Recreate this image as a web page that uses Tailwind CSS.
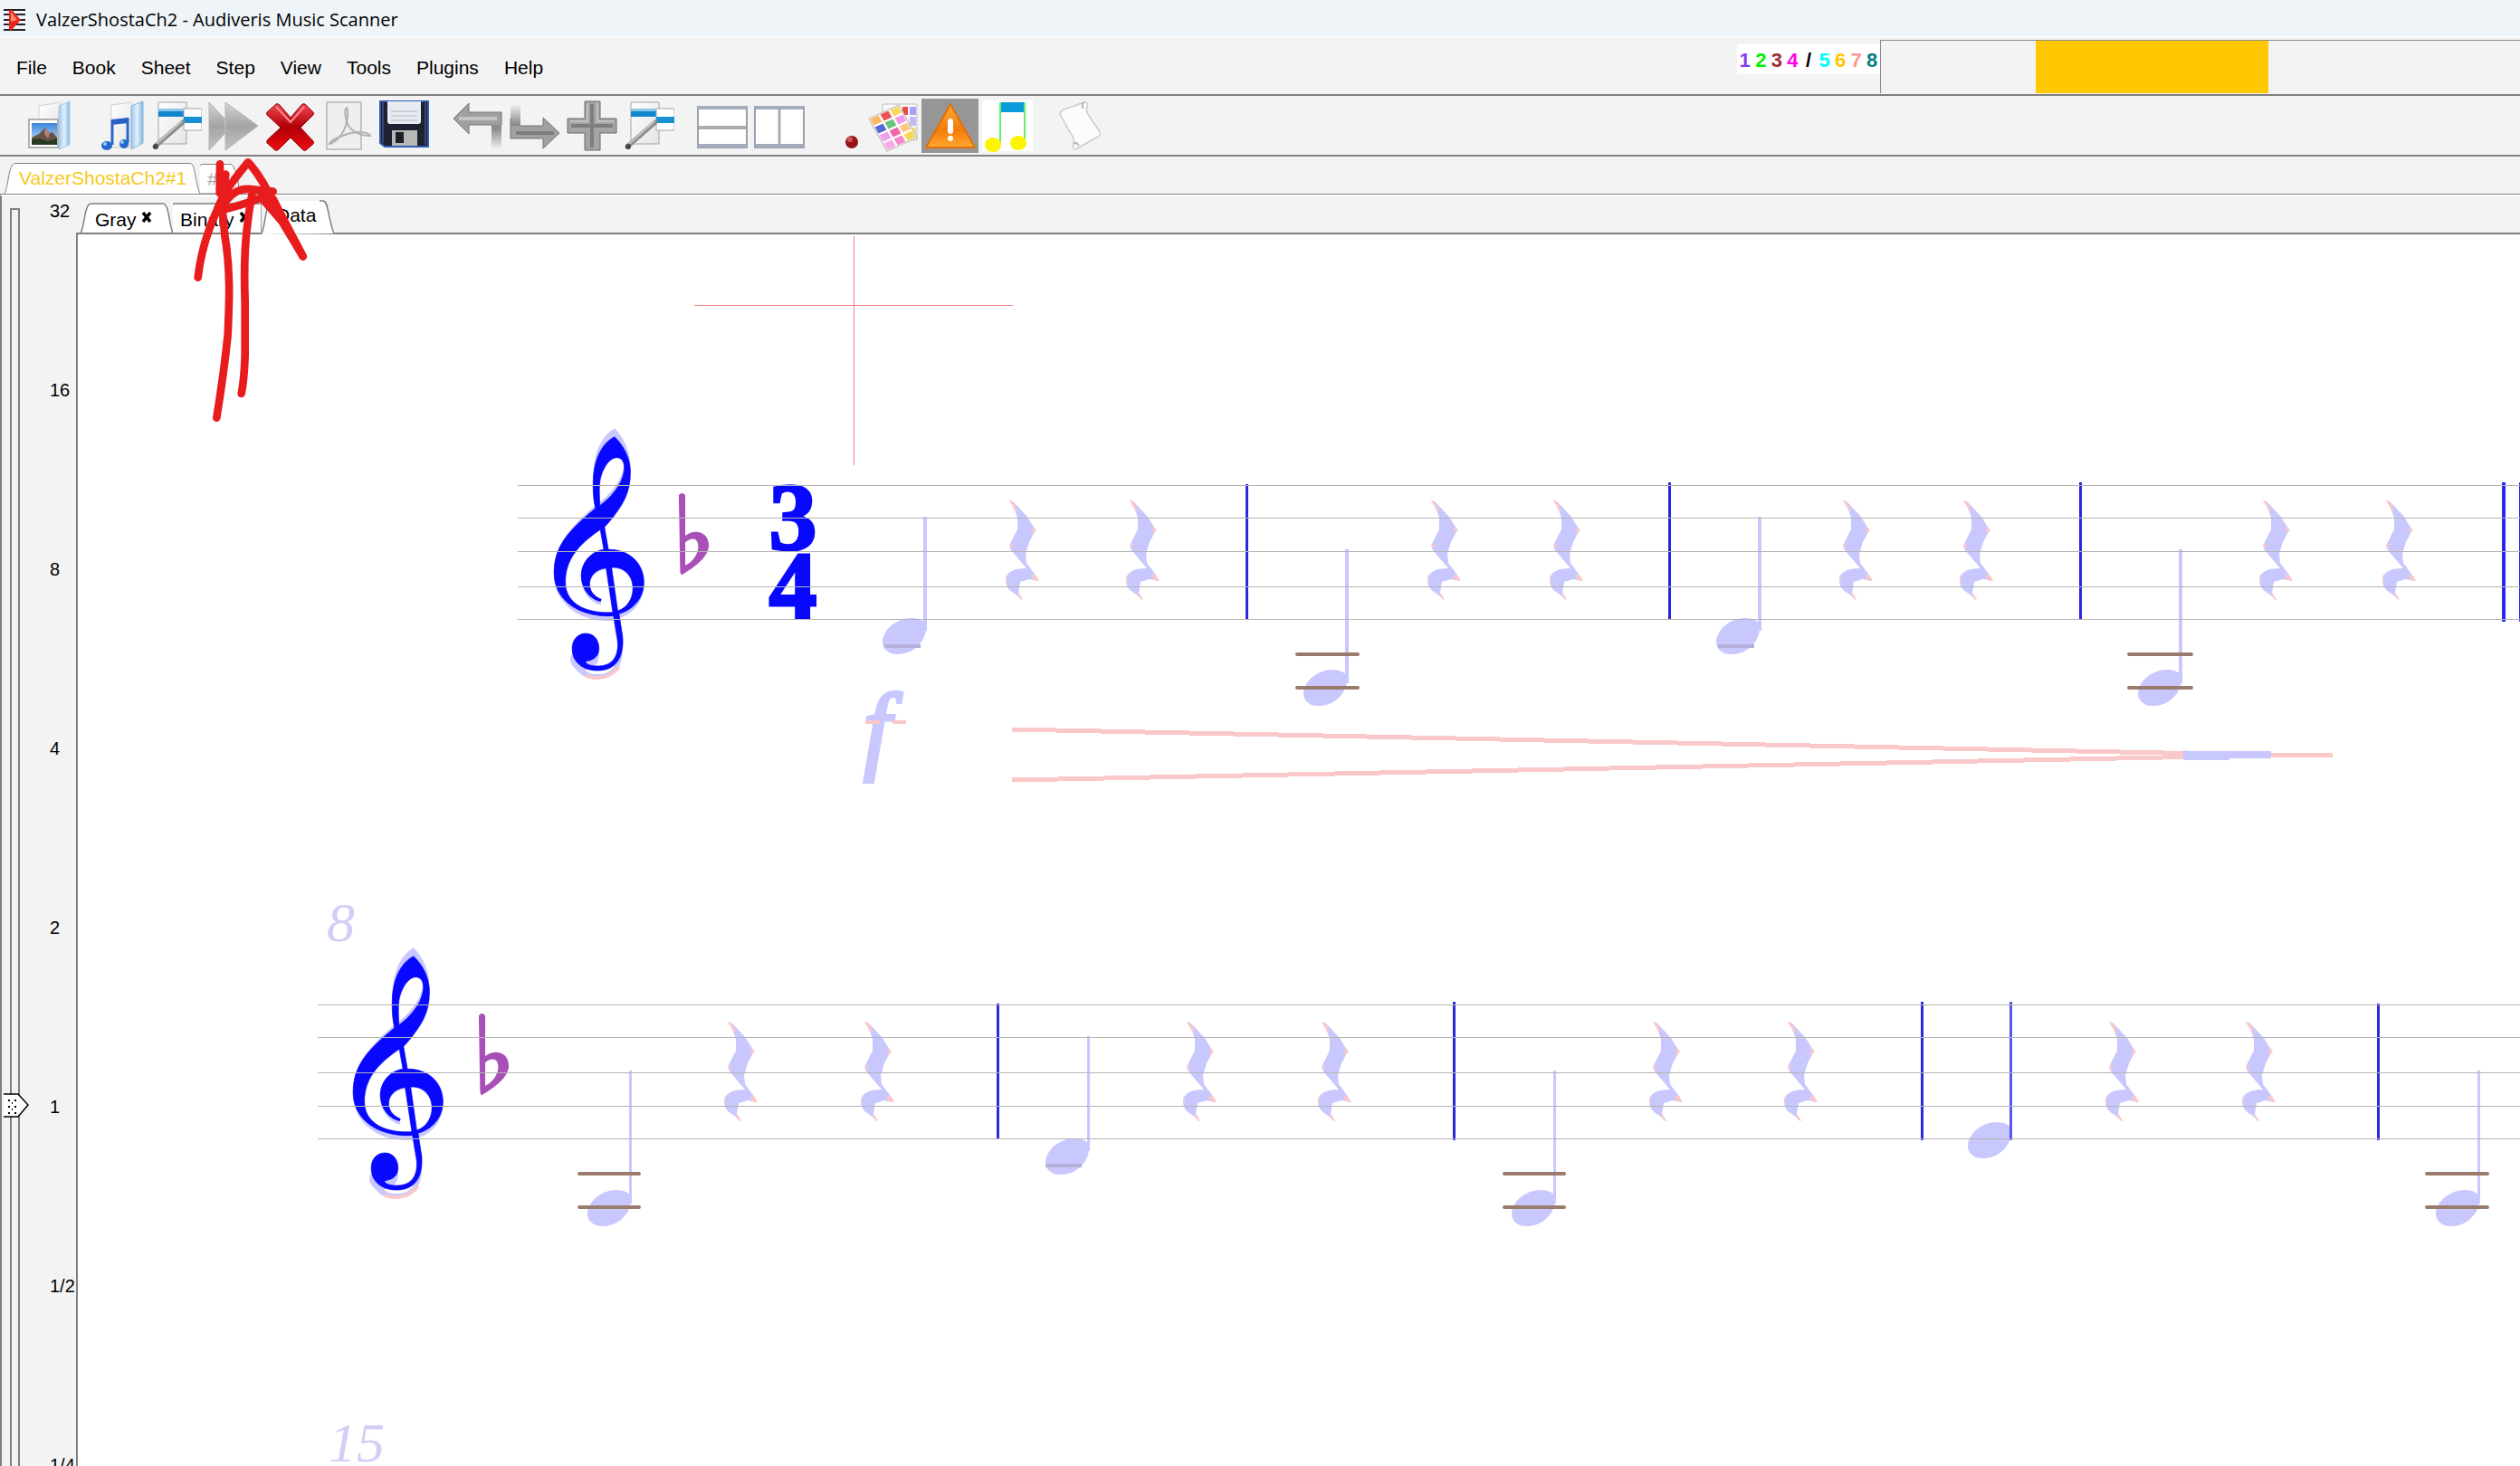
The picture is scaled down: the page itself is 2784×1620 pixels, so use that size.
<!DOCTYPE html>
<html lang="en">
<head>
    <meta charset="UTF-8">
    <meta name="viewport" content="width=device-width, initial-scale=1.0">
    <title>ValzerShostaCh2 - Audiveris Music Scanner</title>
    <script src="https://cdn.jsdelivr.net/npm/@tailwindcss/browser@4"></script>
</head>
<body class="relative flex h-screen flex-col overflow-hidden bg-[#f3f3f3] font-['Liberation_Sans',Arial,sans-serif] text-[21px] leading-6 text-black">

    <!-- Title bar -->
    <header class="flex h-10 shrink-0 items-center gap-3 bg-[#eff4f9] pt-1 pl-1">
        <svg class="h-6 w-6" viewBox="0 0 24 24">
            <path d="M0 1h24M0 6h24M0 12h24M0 17h24M0 23h24" stroke="#222" stroke-width="2"/>
            <path d="M6 1l3 0 10 11-10 11H6z" fill="#e8261c"/>
            <path d="M8 3l7 9-7 2z" fill="#ff8a70"/>
        </svg>
        <h1 class="font-['Open_Sans',sans-serif] text-[20px]">ValzerShostaCh2 - Audiveris Music Scanner</h1>
    </header>

    <!-- Menu bar with step progress -->
    <div class="flex h-16 shrink-0 border-t border-white">
        <nav class="flex items-center gap-7 pt-1 pl-[18px]">
            <button>File</button>
            <button>Book</button>
            <button>Sheet</button>
            <button>Step</button>
            <button>View</button>
            <button>Tools</button>
            <button>Plugins</button>
            <button>Help</button>
        </nav>
        <div class="ml-auto flex w-[31%] max-w-[867px] min-w-[840px]">
            <div class="mt-2 -ml-[2px] grid h-[33px] w-[158px] shrink-0 grid-cols-9 items-center bg-white pt-[2px] text-center text-[22px] font-bold">
                <span class="text-[#8040f0]">1</span>
                <span class="text-[#00f000]">2</span>
                <span class="text-[#a02830]">3</span>
                <span class="text-[#ff00e8]">4</span>
                <span>/</span>
                <span class="text-[#00ffff]">5</span>
                <span class="text-[#ffc800]">6</span>
                <span class="text-[#ff9696]">7</span>
                <span class="text-[#008080]">8</span>
            </div>
            <div role="progressbar" aria-label="Step progress" class="mt-[3px] mb-px flex flex-1 border-t border-l border-[#8c8c8c] pl-[171px]">
                <div class="w-[257px] bg-[#ffc800]"></div>
            </div>
        </div>
    </div>

    <!-- Tool bar -->
    <div class="flex h-[69px] shrink-0 items-center border-y-2 border-[#808080] pl-[21px]">
        <button aria-label="Open image" class="flex h-[60px] w-[63px] justify-center">
            <svg class="h-[60px] w-14" viewBox="0 0 56 60">
                <defs>
                    <linearGradient id="pane" x1="0" x2="1"><stop offset="0" stop-color="#9cc8ee"/><stop offset=".5" stop-color="#e2f1fc"/><stop offset="1" stop-color="#84b4dc"/></linearGradient>
                    <linearGradient id="paper" x1="0" y1="0" x2="1" y2="1"><stop offset="0" stop-color="#fff"/><stop offset="1" stop-color="#e4e4e4"/></linearGradient>
                    <linearGradient id="sky" x2="0" y2="1"><stop offset="0" stop-color="#3a86dc"/><stop offset="1" stop-color="#cfe6fa"/></linearGradient>
                </defs>
                <path d="M18 8l24-4v40H18z" fill="url(#paper)" stroke="#d0d0d0"/>
                <path d="M40 8l12-5v48l-12 5z" fill="url(#pane)" stroke="#a8cbe8"/>
                <path d="M7 23h32v31H7z" fill="#fff" stroke="#b0b0b0" stroke-width="2"/>
                <path d="M10 27h28v24H10z" fill="url(#sky)"/>
                <path d="M10 43l8-4 7-7 5 6 3-1 5 6v5H10z" fill="#6a5148"/>
                <path d="M25 32l5 6-2 6-4-5z" fill="#a98478"/>
                <path d="M10 45l9-1 8 3 11-3v7H10z" fill="#263c22"/>
            </svg>
        </button>
        <span class="w-4"></span>
        <button aria-label="Open book" class="flex h-[60px] w-[63px] justify-center">
            <svg class="h-[60px] w-14" viewBox="0 0 56 60">
                <path d="M19 7l23-3v50H19z" fill="url(#paper)" stroke="#d0d0d0"/>
                <path d="M41 8l13-5v46l-13 7z" fill="url(#pane)" stroke="#8ab4da"/>
                <path d="M20 51V25l17-2v26" fill="none" stroke="#2c68c8" stroke-width="3"/>
                <path d="M19 23l19-2v6l-19 2z" fill="#2a62c4"/>
                <ellipse cx="14" cy="52" rx="6" ry="5" fill="#2468cc"/>
                <ellipse cx="33" cy="50" rx="5" ry="5" fill="#2468cc"/>
                <circle cx="12" cy="50" r="2" fill="#9cc8f8"/>
                <circle cx="31" cy="48" r="2" fill="#9cc8f8"/>
            </svg>
        </button>
        <button aria-label="Transcribe sheet" class="flex h-[60px] w-[63px] justify-center">
            <svg class="h-[60px] w-14" viewBox="0 0 56 60">
                <path d="M8 4h31v46H8z" fill="url(#paper)" stroke="#a4a4a4"/>
                <path d="M8 11h31v9H8z" fill="#1286cc"/>
                <path d="M8 11h31v3H8z" fill="#8cc8ec"/>
                <path d="M36 11h20v24H36z" fill="#fff" stroke="#a4a4a4"/>
                <path d="M36 20h20v7H36z" fill="#1a90d4"/>
                <path d="M4 53L35 26" stroke="#8c8c8c" stroke-width="5" stroke-linecap="round"/>
                <path d="M6 50L34 25" stroke="#c4c4c4" stroke-width="2"/>
                <circle cx="5" cy="53" r="3" fill="#444"/>
            </svg>
        </button>
        <button aria-label="Transcribe book" class="flex h-[60px] w-[63px] justify-center">
            <svg class="h-[60px] w-14" viewBox="0 0 56 60">
                <defs><linearGradient id="gray" x2="0" y2="1"><stop offset="0" stop-color="#d4d4d4"/><stop offset=".5" stop-color="#a4a4a4"/><stop offset="1" stop-color="#c4c4c4"/></linearGradient></defs>
                <path d="M1 4l18 19V4l36 26-36 27V38L1 57z" fill="url(#gray)" stroke="#b4b4b4"/>
                <path d="M19 23v15" stroke="#c8c8c8"/>
            </svg>
        </button>
        <button aria-label="Stop" class="flex h-[60px] w-[63px] justify-center">
            <svg class="h-[60px] w-14" viewBox="0 0 56 60">
                <defs><linearGradient id="red" x2="0" y2="1"><stop offset="0" stop-color="#f04850"/><stop offset=".5" stop-color="#b00008"/><stop offset="1" stop-color="#f00c10"/></linearGradient></defs>
                <path d="M12 6q2-1 4 1l12 14L40 7q2-2 4-1l9 9q1 2 0 3L39 32l14 15q1 2 0 3l-8 7q-2 1-4-1L28 43 15 56q-2 2-4 1l-9-8q-1-2 1-4l14-13L2 18q-1-2 0-3z" fill="url(#red)" stroke="#98040c"/>
                <path d="M12 9l16 17L43 9" fill="none" stroke="#ff8a8a" stroke-width="2"/>
            </svg>
        </button>
        <button aria-label="Export PDF" class="flex h-[60px] w-[63px] justify-center">
            <svg class="h-[60px] w-14" viewBox="0 0 56 60">
                <path d="M5 4h38v52H5z" fill="#efefef" stroke="#c4c4c4" stroke-width="2"/>
                <path d="M8 50c8-2 14-10 18-20 2-8 3-16 1-20-3 2-2 12 2 20 4 6 14 12 24 11-2-5-18-5-28-1-8 3-16 6-17 10z" fill="none" stroke="#b0b0b0" stroke-width="2"/>
            </svg>
        </button>
        <button aria-label="Save" class="flex h-[60px] w-[63px] justify-center">
            <svg class="h-[60px] w-14" viewBox="0 0 56 60">
                <path d="M1 3h53v50H6l-5-4z" fill="#1c2232" stroke="#2a5cb8" stroke-width="2"/>
                <path d="M9 3h37v22q0 3-3 3H12q-3 0-3-3z" fill="#e8ecf2"/>
                <path d="M13 14h29M13 19h29M13 24h29" stroke="#b4b8c0" stroke-width="1"/>
                <path d="M14 35h28v17H14z" fill="#b8b8b4"/>
                <path d="M18 37h9v12h-9z" fill="#1c2028"/>
                <path d="M4 3v46M51 3v48" stroke="#3c4660" stroke-width="2"/>
            </svg>
        </button>
        <span class="w-[18px]"></span>
        <button aria-label="Undo" class="flex h-[60px] w-[63px] justify-center">
            <svg class="h-[60px] w-14" viewBox="0 0 56 60">
                <defs><linearGradient id="fade" x2="0" y2="1"><stop offset=".2" stop-color="#8c8c8c"/><stop offset="1" stop-color="#8c8c8c" stop-opacity="0"/></linearGradient></defs>
                <path d="M43 28h11v28H43z" fill="url(#fade)"/>
                <path d="M1 22L18 5v10h36v14H18v10z" fill="#a0a0a0"/>
                <path d="M43 29H18v10L1 22 18 5v10h36v14" fill="none" stroke="#747474"/>
                <path d="M7 22h42" stroke="#c4c4c4" stroke-width="4"/>
            </svg>
        </button>
        <button aria-label="Redo" class="flex h-[60px] w-[63px] justify-center">
            <svg class="h-[60px] w-14" viewBox="0 0 56 60">
                <defs><linearGradient id="rise" x2="0" y2="1"><stop offset="0" stop-color="#8c8c8c" stop-opacity="0"/><stop offset=".8" stop-color="#8c8c8c"/></linearGradient></defs>
                <path d="M1 6h11v28H1z" fill="url(#rise)"/>
                <path d="M1 30h36V21l18 17-18 17V44H1z" fill="#a0a0a0"/>
                <path d="M1 22v22h36v11l18-17-18-17v9H12" fill="none" stroke="#747474"/>
                <path d="M7 38h42" stroke="#7c7c7c" stroke-width="4"/>
            </svg>
        </button>
        <button aria-label="Zoom in" class="flex h-[60px] w-[63px] justify-center">
            <svg class="h-[60px] w-14" viewBox="0 0 56 60">
                <path d="M20 3h17v19h18v16H37v19H20V38H1V22h19z" fill="#a4a4a4" stroke="#6c6c6c"/>
                <path d="M28 6v48M5 30h46" stroke="#7e7e7e" stroke-width="4"/>
                <path d="M23 5v20H4M34 5v20h18" fill="none" stroke="#c0c0c0" stroke-width="2"/>
            </svg>
        </button>
        <button aria-label="Reprocess" class="flex h-[60px] w-[63px] justify-center">
            <svg class="h-[60px] w-14" viewBox="0 0 56 60">
                <path d="M8 4h31v46H8z" fill="url(#paper)" stroke="#a4a4a4"/>
                <path d="M8 11h31v9H8z" fill="#1286cc"/>
                <path d="M8 11h31v3H8z" fill="#8cc8ec"/>
                <path d="M36 11h20v24H36z" fill="#fff" stroke="#a4a4a4"/>
                <path d="M36 20h20v7H36z" fill="#1a90d4"/>
                <path d="M4 53L35 26" stroke="#8c8c8c" stroke-width="5" stroke-linecap="round"/>
                <path d="M6 50L34 25" stroke="#c4c4c4" stroke-width="2"/>
                <circle cx="5" cy="53" r="3" fill="#444"/>
            </svg>
        </button>
        <span class="w-[18px]"></span>
        <button aria-label="Fit width" class="flex h-[60px] w-[63px] justify-center">
            <svg class="h-[60px] w-14" viewBox="0 0 56 60">
                <path d="M1 9h54v45H1z" fill="#fff" stroke="#98a0b0" stroke-width="2"/>
                <path d="M1 10h54M1 52h54" stroke="#a4acbc" stroke-width="4"/>
                <path d="M2 32h52" stroke="#acacac" stroke-width="4"/>
            </svg>
        </button>
        <button aria-label="Fit height" class="flex h-[60px] w-[63px] justify-center">
            <svg class="h-[60px] w-14" viewBox="0 0 56 60">
                <path d="M1 9h54v45H1z" fill="#fff" stroke="#98a0b0" stroke-width="2"/>
                <path d="M1 10h54M1 52h54" stroke="#a4acbc" stroke-width="4"/>
                <path d="M28 12v38" stroke="#acacac" stroke-width="3"/>
            </svg>
        </button>
        <button aria-label="Mark" class="flex h-[60px] w-[63px] justify-center">
            <svg class="h-[60px] w-14" viewBox="0 0 56 60">
                <circle cx="45" cy="48" r="7" fill="#981414"/>
                <circle cx="43" cy="45" r="3" fill="#c85858"/>
            </svg>
        </button>
        <button aria-label="Voices" class="flex h-[60px] w-[63px] justify-center">
            <svg class="h-[60px] w-14" viewBox="0 0 56 60">
                <path d="M16 6h38v40H16z" fill="#fafafa" stroke="#c0c0c0"/>
                <path d="M38 9h6v9h-6z" fill="#e84848"/>
                <path d="M46 9h7v9h-7z" fill="#a8a0f0"/>
                <path d="M46 20h7v10h-7z" fill="#c4b8f8"/>
                <path d="M46 32h7v10h-7z" fill="#f8e078"/>
                <g transform="matrix(11 -5 5 9 1 22)">
                    <path d="M0 0h3v4H0z" fill="#fff" stroke="#bbb" stroke-width=".1"/>
                    <path d="M.1.1h.8v.8h-.8z" fill="#fcb860"/>
                    <path d="M1.1.1h.8v.8h-.8z" fill="#f05058"/>
                    <path d="M2.1.1h.8v.8h-.8z" fill="#fcd860"/>
                    <path d="M.1 1.1h.8v.8h-.8z" fill="#5868d8"/>
                    <path d="M1.1 1.1h.8v.8h-.8z" fill="#68c478"/>
                    <path d="M2.1 1.1h.8v.8h-.8z" fill="#f498e8"/>
                    <path d="M.1 2.1h.8v.8h-.8z" fill="#f0a0e8"/>
                    <path d="M1.1 2.1h.8v.8h-.8z" fill="#f068a8"/>
                    <path d="M2.1 2.1h.8v.8h-.8z" fill="#fcc880"/>
                    <path d="M.1 3.1h.8v.8h-.8z" fill="#f8a8e8"/>
                    <path d="M1.1 3.1h.8v.8h-.8z" fill="#f888c8"/>
                    <path d="M2.1 3.1h.8v.8h-.8z" fill="#f8d850"/>
                </g>
            </svg>
        </button>
        <button aria-label="Errors" class="flex h-[60px] w-[63px] justify-center bg-[#969696]">
            <svg class="h-[60px] w-14" viewBox="0 0 56 60">
                <defs><linearGradient id="warn" x2="0" y2="1"><stop offset="0" stop-color="#fca838"/><stop offset=".6" stop-color="#f47c08"/><stop offset="1" stop-color="#ffa830"/></linearGradient></defs>
                <path d="M28 6l27 48H1z" fill="url(#warn)" stroke="#e07008" stroke-width="2" stroke-linejoin="round"/>
                <path d="M28 25v11" stroke="#fff" stroke-width="6" stroke-linecap="round"/>
                <circle cx="28" cy="44" r="3" fill="#fff"/>
            </svg>
        </button>
        <button aria-label="Play" class="flex h-[60px] w-[63px] justify-center">
            <svg class="h-[60px] w-14" viewBox="0 0 56 60">
                <path d="M0 2h56v56H0z" fill="#fff"/>
                <path d="M19 4h28v11H19z" fill="#0a9cdc"/>
                <path d="M20 4v46M47 4v44" stroke="#60f070" stroke-width="2"/>
                <ellipse cx="12" cy="51" rx="9" ry="8" fill="#fcf400"/>
                <ellipse cx="40" cy="49" rx="9" ry="8" fill="#fcf400"/>
            </svg>
        </button>
        <span class="w-4"></span>
        <button aria-label="Script" class="flex h-[60px] w-[63px] justify-center">
            <svg class="h-[60px] w-14" viewBox="0 0 56 60">
                <path d="M7 17q2-5 7-6l20-7q5 0 3 5-2 5 4 13l9 13q3 5-1 7l-23 13q-6 3-4-4 2-6-4-14z" fill="#fcfcfc" stroke="#ccc" stroke-width="1.5"/>
                <path d="M22 50q3-3 6 2M34 4q-4 2-1 7" fill="none" stroke="#b8b8b8" stroke-width="2"/>
            </svg>
        </button>
    </div>

    <!-- Sheet tabs -->
    <div class="flex h-[42px] shrink-0 items-end border-b border-[#808080] pl-[5px]">
        <button class="relative h-[34px] w-[216px] text-left text-[#f8c820]">
            <svg class="absolute inset-0 h-full w-full" viewBox="0 0 216 34" preserveAspectRatio="none"><path d="M0 34C5 24 4 1 12 .5H205C211 1 210 20 216 34" fill="#fff" stroke="#808080"/></svg>
            <span class="relative pl-4">ValzerShostaCh2#1</span>
        </button>
        <button class="relative h-[33px] w-[44px] text-left text-[#a8a8a8]">
            <svg class="absolute inset-0 h-full w-full" viewBox="0 0 44 33" preserveAspectRatio="none"><path d="M-4 7Q-1 1 2 .5H34Q40 2 44 33H0" fill="#fff" stroke="#808080"/></svg>
            <span class="relative pl-2">#2</span>
        </button>
    </div>

    <main class="flex min-h-0 flex-1 border-t-2 border-l-2 border-t-white border-l-[#808080]">
        <!-- Zoom slider -->
        <aside class="relative flex w-[82px] shrink-0 overflow-hidden">
            <input type="range" min="-2" max="5" value="0" aria-label="Zoom" class="mt-[13px] ml-[9px] h-full w-[11px] shrink-0 appearance-none border-t-2 border-r-2 border-l-2 border-[#808080] [direction:rtl] [writing-mode:vertical-lr] [&::-webkit-slider-thumb]:opacity-0">
            <svg class="absolute top-[991px] left-[2px] h-7 w-7" viewBox="0 0 28 28">
                <path d="M0 1h16l11 12-11 13H0z" fill="#fff"/>
                <path d="M0 1h16l11 12-11 13H0" fill="none" stroke="#000" stroke-width="1.5"/>
                <path d="M5 7h2v2H5zM12 7h2v2h-2zM9 10h1v2H9zM5 14h2v2H5zM12 14h2v2h-2zM9 17h1v2H9zM5 21h2v2H5zM12 21h2v2h-2z"/>
            </svg>
            <div class="flex flex-col pt-[4px] pl-[33px] text-[20px] leading-6">
                <span class="h-[198px] shrink-0">32</span>
                <span class="h-[198px] shrink-0">16</span>
                <span class="h-[198px] shrink-0">8</span>
                <span class="h-[198px] shrink-0">4</span>
                <span class="h-[198px] shrink-0">2</span>
                <span class="h-[198px] shrink-0">1</span>
                <span class="h-[198px] shrink-0">1/2</span>
                <span class="h-[198px] shrink-0">1/4</span>
            </div>
        </aside>

        <section class="flex min-w-0 flex-1 flex-col">
            <!-- Views of the sheet -->
            <div class="flex h-[42px] shrink-0 items-end border-b-2 border-[#808080] pl-[5px]">
                <button class="relative h-[33px] w-[102px] pt-1 pl-4 text-left">
                    <svg class="absolute inset-0 h-full w-full" viewBox="0 0 102 33" preserveAspectRatio="none"><path d="M0 34C5 24 4 1 12 1H91C98 2 97 20 102 34" fill="#fff" stroke="#808080" stroke-width="1.5"/></svg>
                    <span class="relative">Gray</span>
                    <svg class="relative mb-2 inline h-3 w-3" viewBox="0 0 12 12"><path d="M2 1l8 10M10 1L2 11" stroke="#000" stroke-width="3.5"/></svg>
                </button>
                <button class="relative h-[33px] w-[98px] pt-1 pl-2 text-left whitespace-nowrap">
                    <svg class="absolute inset-0 h-full w-full" viewBox="0 0 98 33" preserveAspectRatio="none"><path d="M-4 7Q-1 1 2 1H98V34H0" fill="#fff" stroke="#808080" stroke-width="1.5"/></svg>
                    <span class="relative">Binary</span>
                    <svg class="relative mb-2 inline h-3 w-3" viewBox="0 0 12 12"><path d="M2 1l8 10M10 1L2 11" stroke="#000" stroke-width="3.5"/></svg>
                </button>
                <button class="relative -mb-[2px] h-[38px] w-[80px] pb-1 pl-4 text-left">
                    <svg class="absolute inset-0 h-full w-full" viewBox="0 0 80 38" preserveAspectRatio="none"><path d="M0 38C5 26 4 1 12 1H66C74 1 73 20 80 37" fill="#fff"/><path d="M0 37C5 26 4 1 12 1M64 1H68C74 1 73 20 80 37" fill="none" stroke="#808080" stroke-width="1.5"/></svg>
                    <span class="relative">Data</span>
                </button>
            </div>

            <!-- Score canvas, drawn in window coordinates -->
            <svg class="min-h-0 w-full flex-1 border-l-2 border-[#808080] bg-white">
                <defs>
                    <path id="clef" fill-rule="evenodd" d="M333 68C360 95 384 140 382 190C382 250 360 290 335 325C322 345 308 360 302 368L314 442C375 440 424 485 424 550C424 600 395 640 347 655L358 730C362 780 350 843 280 843C235 843 202 815 202 770C202 740 220 720 244 720C270 720 285 742 285 770C285 795 270 808 245 812C240 816 250 828 280 828C325 828 346 800 343 745L330 662C240 670 146 620 146 520C146 430 190 380 274 305C268 280 266 250 267 215C268 160 285 95 333 68ZM340 137C315 137 293 180 288 215C285 240 286 270 288 296C320 270 355 230 362 185C366 160 360 137 340 137ZM289 376C215 430 181 480 181 550C181 625 250 655 328 650L307 503C275 507 256 530 256 555C256 575 265 595 292 607L290 614C262 607 232 580 230 530C230 485 260 448 300 442ZM324 501C365 498 390 530 390 570C390 605 372 635 343 645Z"/>
                    <g id="clef-pair">
                        <g transform="translate(0 -33) scale(1 1.073)">
                            <use href="#clef" fill="#c8c8ff"/>
                        </g>
                        <path d="M243 858C270 875 320 870 347 830" fill="none" stroke="#fac8c8" stroke-width="11"/>
                        <path d="M200 790C186 820 215 845 240 857V835z" fill="#c8c8ff"/>
                        <use href="#clef" fill="#0808ff" stroke="#0808ff" stroke-width="2"/>
                    </g>
                    <path id="flat" fill-rule="evenodd" fill="#a850b8" d="M532 262Q542 248 552 262V396C580 372 625 380 625 430C622 470 580 500 542 526Q536 524 536 510ZM552 418V494C570 486 588 465 592 438C594 395 565 405 552 418Z"/>
                    <path id="head" fill="#c8c8ff" d="M-24 6C-23-8-8-20 8-20C18-20 23-16 24-12C25 0 18 10 10 15C3 20-8 21-15 19C-21 16-24 12-24 6Z"/>
                    <g id="rest">
                        <path fill="#c8c8ff" d="M4 0L9 2 24 18 33 33 26 46 22 59 23 69 32 81 36 89 26 87 16 90 14 102 19 110 10 103Q0 98 0 88 1 75 23 75L6 55 4 50 13 32 13 19 9 8Z"/>
                        <path fill="#fac8c8" d="M4 0L8 1 12 8 12 14ZM30 28L34 33 29 37ZM8 47L4 50 7 54ZM29 82L33 82 37 89 30 88ZM12 102L15 103 19 110 16 109ZM1 80L0 88 2 91Z"/>
                    </g>
                </defs>
                <g transform="translate(-86 -259)">
                    <!-- Crosshair -->
                    <path d="M943.5 261v253M767 337.5h352" fill="none" stroke="#f47c7c" stroke-width="1"/>

                    <!-- First system -->
                    <use href="#clef-pair" transform="translate(560 460) scale(.357 .3333)"/>
                    <use href="#flat" transform="translate(560 460) scale(.357 .3333)"/>
                    <g class="font-['Liberation_Serif',serif] text-[106px] font-bold" fill="#0808ff" stroke="#0808ff" stroke-width="3" text-anchor="middle">
                        <text x="876" y="607">3</text>
                        <text x="876" y="683">4</text>
                    </g>
                    <g stroke="#c8c8ff" stroke-width="4">
                        <path d="M1022 571v126M1488 607v148M1944 571v126M2409 607v148"/>
                    </g>
                    <use href="#head" x="999" y="703"/>
                    <use href="#head" x="1464" y="760"/>
                    <use href="#head" x="1920" y="703"/>
                    <use href="#head" x="2386" y="760"/>
                    <path d="M977 714h40M1898 714h40" stroke="#b4b0d8" stroke-width="4"/>
                    <path d="M1433 723h67M1433 760h67M2352 723h69M2352 760h69" stroke="#9b7b6b" stroke-width="4" stroke-linecap="round"/>
                    <g>
                        <use href="#rest" x="1111" y="553"/>
                        <use href="#rest" x="1244" y="553"/>
                        <use href="#rest" x="1577" y="553"/>
                        <use href="#rest" x="1712" y="553"/>
                        <use href="#rest" x="2032" y="553"/>
                        <use href="#rest" x="2165" y="553"/>
                        <use href="#rest" x="2496" y="553"/>
                        <use href="#rest" x="2632" y="553"/>
                    </g>
                    <path d="M1377.5 535v149M1844.5 533v151M2298.5 533v151" stroke="#2828dc" stroke-width="3"/>
                    <path d="M2766 533v154M2785 533v154" stroke="#2828f0" stroke-width="4"/>

                    <!-- Forte and diminuendo -->
                    <text x="954" y="841" class="font-['Liberation_Serif',serif] text-[108px] italic" fill="#c8c8ff" stroke="#c8c8ff" stroke-width="4">f</text>
                    <path d="M956 798h16M986 798h15" stroke="#fac8c8" stroke-width="4"/>
                    <g stroke="#fac8c8" stroke-width="5" shape-rendering="crispEdges">
                        <path d="M1118 806L2440 833M1118 862L2440 836M2500 834H2577"/>
                    </g>
                    <path d="M2412 829l6 1h91v8h-46v2h-51z" fill="#c8c8ff"/>

                    <!-- Second system -->
                    <g class="font-['Liberation_Serif',serif] text-[62px] italic" fill="#d6ccf6">
                        <text x="361" y="1040">8</text>
                        <text x="363" y="1615">15</text>
                    </g>
                    <use href="#clef-pair" transform="translate(338 1034) scale(.357 .3333)"/>
                    <use href="#flat" transform="translate(339 1035) scale(.357 .3333)"/>
                    <g stroke="#c8c8ff" stroke-width="3">
                        <path d="M696.5 1183v147M1202.5 1145v127M1717.5 1183v147M2738.5 1183v147"/>
                    </g>
                    <use href="#head" x="673" y="1335"/>
                    <use href="#head" x="1179" y="1278"/>
                    <use href="#head" x="1694" y="1335"/>
                    <use href="#head" x="2198" y="1260"/>
                    <use href="#head" x="2715" y="1335"/>
                    <path d="M1155 1288h40" stroke="#b4b0d8" stroke-width="4"/>
                    <path d="M640 1297h66M640 1334h66M1662 1297h66M1662 1334h66M2681 1297h67M2681 1334h67" stroke="#9b7b6b" stroke-width="4" stroke-linecap="round"/>
                    <g>
                        <use href="#rest" x="800" y="1129"/>
                        <use href="#rest" x="951" y="1129"/>
                        <use href="#rest" x="1307" y="1129"/>
                        <use href="#rest" x="1456" y="1129"/>
                        <use href="#rest" x="1822" y="1129"/>
                        <use href="#rest" x="1971" y="1129"/>
                        <use href="#rest" x="2326" y="1129"/>
                        <use href="#rest" x="2477" y="1129"/>
                    </g>
                    <path d="M1102.5 1109v149M1606.5 1107v153M2123.5 1107v153M2627.5 1109v151" stroke="#2828dc" stroke-width="3"/>
                    <path d="M2221.5 1107v153" stroke="#5858ec" stroke-width="3"/>

                    <!-- Staff lines -->
                    <path d="M572 536.5h2212M572 572.5h2212M572 609.5h2212M572 648.5h2212M572 684.5h2212M351 1110.5h2433M351 1146.5h2433M351 1185.5h2433M351 1222.5h2433M351 1258.5h2433" stroke="#b4b4b4"/>
                </g>
            </svg>
        </section>
    </main>

    <!-- Hand-drawn arrow pointing at the toolbar -->
    <svg class="pointer-events-none absolute top-[160px] left-0 h-[320px] w-[420px]" viewBox="0 0 1260 960">
        <g fill="none" stroke="#e81c1c" stroke-width="26" stroke-linecap="round" stroke-linejoin="round">
            <path d="M656 440C665 360 690 280 720 215C745 150 780 110 822 58C840 75 870 120 885 150L1004 370"/>
            <path d="M729 64L728 160M748 98L738 180L722 210"/>
            <path d="M735 205C765 160 790 145 830 147L905 155C860 185 780 205 740 215"/>
            <path d="M738 225L745 300C765 420 760 520 755 630C745 730 735 800 718 905"/>
            <path d="M835 165C810 300 808 400 812 520V700C810 760 805 800 800 825"/>
            <path d="M875 185L935 255L1004 370L905 180"/>
        </g>
    </svg>
</body>
</html>
